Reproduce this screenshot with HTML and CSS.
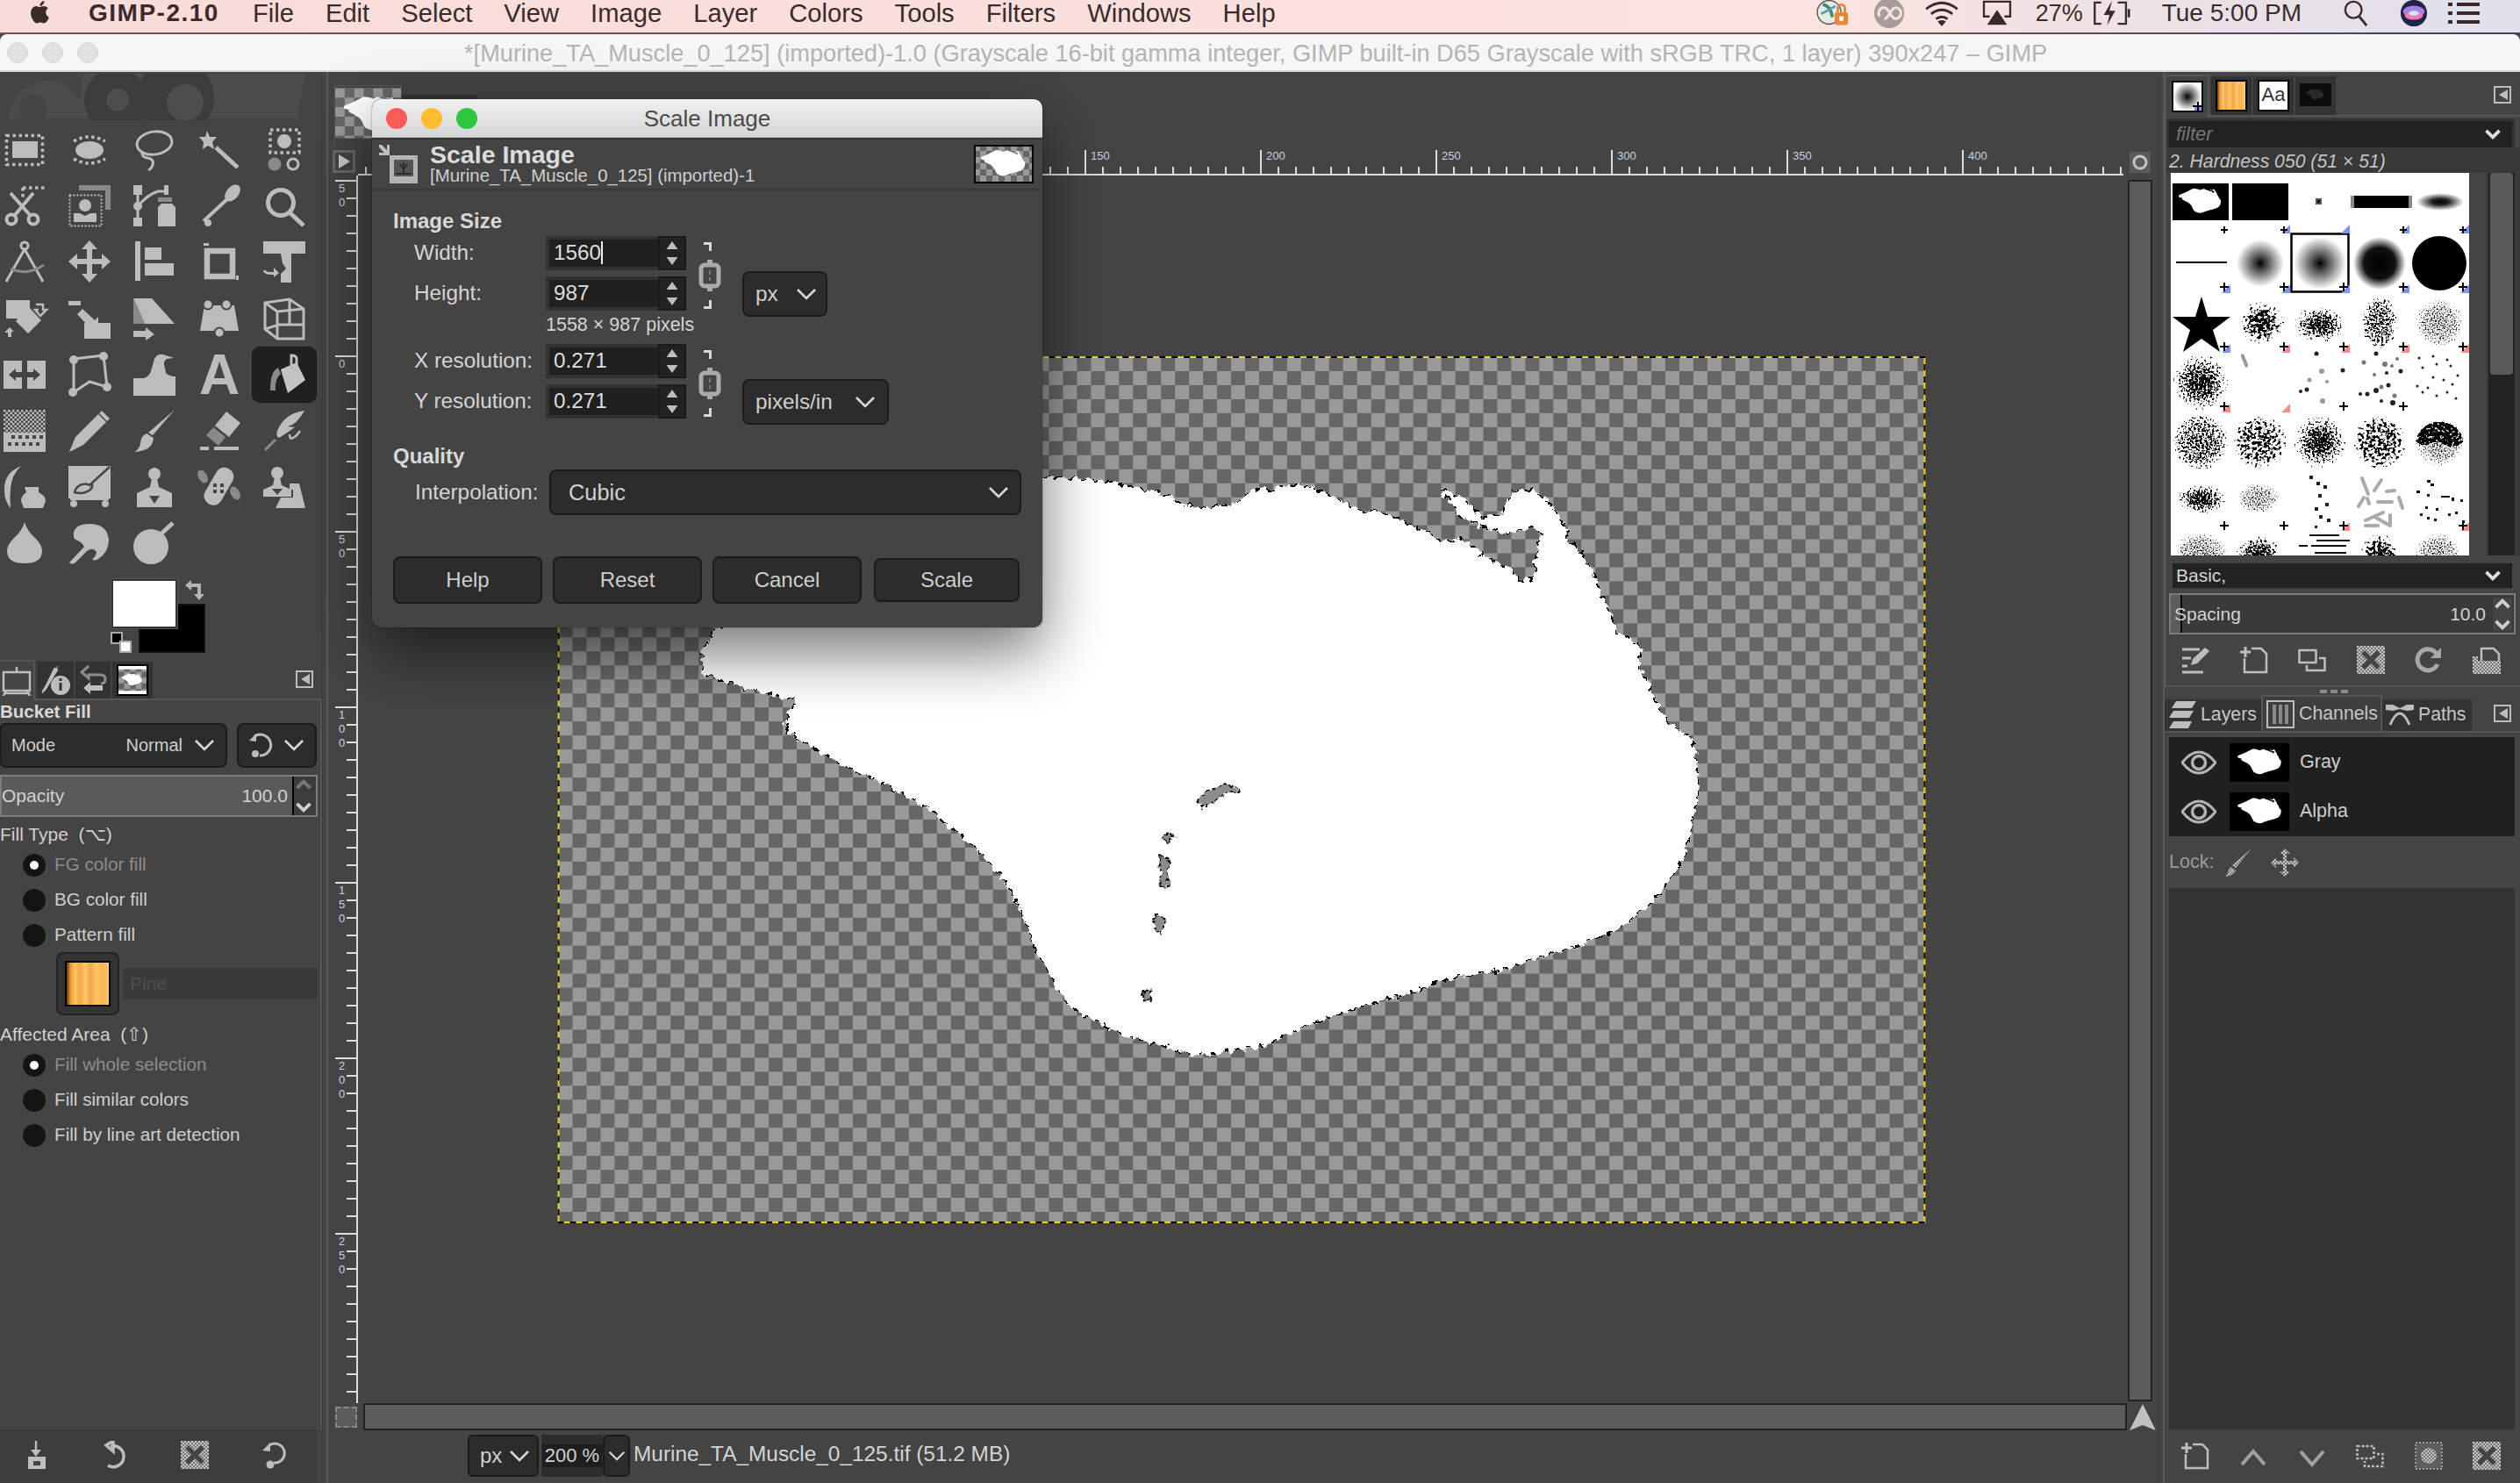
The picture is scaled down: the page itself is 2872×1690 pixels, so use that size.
FILE: index.html
```html
<!DOCTYPE html>
<html lang="en">
<head>
<meta charset="utf-8">
<title>GIMP - Scale Image</title>
<link rel="stylesheet" href="styles.css">
</head>
<body>
<svg class="sprite" aria-hidden="true">
  <defs>
    <pattern id="chk" width="4" height="4" patternUnits="userSpaceOnUse"><rect width="4" height="4" fill="#777"/><rect width="2" height="2" fill="#c4c4c4"/><rect x="2" y="2" width="2" height="2" fill="#c4c4c4"/></pattern>
    <pattern id="chkimg" x="636" y="406" width="32" height="32" patternUnits="userSpaceOnUse"><rect width="32" height="32" fill="#666"/><rect width="16" height="16" fill="#999"/><rect x="16" y="16" width="16" height="16" fill="#999"/></pattern>
    <pattern id="chks" width="14" height="14" patternUnits="userSpaceOnUse"><rect width="14" height="14" fill="#666"/><rect width="7" height="7" fill="#999"/><rect x="7" y="7" width="7" height="7" fill="#999"/></pattern>
    <pattern id="chkm" width="22" height="22" patternUnits="userSpaceOnUse"><rect width="22" height="22" fill="#666"/><rect width="11" height="11" fill="#999"/><rect x="11" y="11" width="11" height="11" fill="#999"/></pattern>
    <pattern id="dith1" width="5" height="5" patternUnits="userSpaceOnUse"><rect width="2.5" height="2.5" fill="#bcbcbc"/><rect x="2.5" y="2.5" width="2.5" height="2.5" fill="#bcbcbc"/></pattern>
    <radialGradient id="soft1"><stop offset="0" stop-color="#000"/><stop offset=".25" stop-color="#444"/><stop offset="1" stop-color="#fff"/></radialGradient>
    <radialGradient id="soft2"><stop offset="0" stop-color="#000"/><stop offset=".35" stop-color="#222"/><stop offset="1" stop-color="#fff"/></radialGradient>
    <radialGradient id="soft3"><stop offset="0" stop-color="#000"/><stop offset=".6" stop-color="#111"/><stop offset="1" stop-color="#fff"/></radialGradient>
    <radialGradient id="fade"><stop offset="0" stop-color="#000" stop-opacity=".72"/><stop offset=".55" stop-color="#000" stop-opacity=".56"/><stop offset="1" stop-color="#000" stop-opacity=".3"/></radialGradient>
    <radialGradient id="fade2"><stop offset="0" stop-color="#000" stop-opacity=".58"/><stop offset=".7" stop-color="#000" stop-opacity=".52"/><stop offset="1" stop-color="#000" stop-opacity=".36"/></radialGradient>
    <linearGradient id="pine" x1="0" x2="1" y1="0" y2="0"><stop offset="0" stop-color="#5a3210"/><stop offset=".08" stop-color="#e88f2c"/><stop offset=".2" stop-color="#ffc862"/><stop offset=".3" stop-color="#f6a84a"/><stop offset=".45" stop-color="#ffc768"/><stop offset=".55" stop-color="#f2a64a"/><stop offset=".7" stop-color="#ffc565"/><stop offset=".85" stop-color="#f7b558"/><stop offset="1" stop-color="#ffc86a"/></linearGradient>
    <filter id="sp1" x="-5%" y="-5%" width="110%" height="110%" color-interpolation-filters="sRGB"><feTurbulence type="fractalNoise" baseFrequency=".42" numOctaves="2" seed="3" result="n"/><feColorMatrix in="n" values="0 0 0 0 0 0 0 0 0 0 0 0 0 0 0 1 0 0 0 0" result="a"/><feComposite in="a" in2="SourceAlpha" operator="arithmetic" k2="1" k3="1" k4="-1"/><feColorMatrix values="0 0 0 0 0 0 0 0 0 0 0 0 0 0 0 0 0 0 9 0"/></filter>
    <filter id="sp2" x="-5%" y="-5%" width="110%" height="110%" color-interpolation-filters="sRGB"><feTurbulence type="fractalNoise" baseFrequency=".3" numOctaves="2" seed="11" result="n"/><feColorMatrix in="n" values="0 0 0 0 0 0 0 0 0 0 0 0 0 0 0 1 0 0 0 0" result="a"/><feComposite in="a" in2="SourceAlpha" operator="arithmetic" k2="1" k3="1" k4="-1"/><feColorMatrix values="0 0 0 0 0 0 0 0 0 0 0 0 0 0 0 0 0 0 9 0"/></filter>
    <filter id="sp3" x="-5%" y="-5%" width="110%" height="110%" color-interpolation-filters="sRGB"><feTurbulence type="fractalNoise" baseFrequency=".6" numOctaves="1" seed="7" result="n"/><feColorMatrix in="n" values="0 0 0 0 0 0 0 0 0 0 0 0 0 0 0 1 0 0 0 0" result="a"/><feComposite in="a" in2="SourceAlpha" operator="arithmetic" k2="1" k3="1" k4="-1"/><feColorMatrix values="0 0 0 0 0 0 0 0 0 0 0 0 0 0 0 0 0 0 4 0"/></filter>
    <filter id="rough" x="-2%" y="-2%" width="104%" height="104%" color-interpolation-filters="sRGB"><feTurbulence type="fractalNoise" baseFrequency=".13" numOctaves="2" seed="5" result="n"/><feDisplacementMap in="SourceGraphic" in2="n" scale="11" xChannelSelector="R" yChannelSelector="G"/></filter>
    <path id="mp" d="M1190 542L1245 546 1280 552 1319 560 1345 572 1364 579 1400 575 1411 573 1425 562 1434 557 1454 557 1459 553 1494 553 1511 562 1534 573 1557 583 1572 582 1595 590 1618 603 1632 605 1643 617 1654 617 1666 613 1698 635 1714 645 1725 648 1729 657 1737 662 1748 660 1754 623 1760 608 1746 599 1737 603 1714 607 1698 600 1685 598 1664 585 1656 573 1654 567 1645 563 1649 558 1672 568 1691 590 1706 587 1716 585 1718 572 1729 558 1744 557 1756 563 1773 580 1787 603 1790 617 1806 633 1819 655 1827 677 1838 697 1842 720 1857 727 1871 738 1871 763 1882 783 1894 807 1905 825 1926 838 1934 853 1936 877 1938 897 1934 920 1928 945 1923 971 1906 1000 1887 1026 1865 1045 1841 1062 1800 1078 1758 1090 1730 1100 1703 1108 1675 1112 1648 1117 1620 1128 1593 1136 1555 1147 1520 1158 1485 1172 1447 1190 1405 1198 1364 1203 1340 1197 1319 1190 1290 1183 1264 1172 1240 1160 1218 1145 1200 1115 1181 1081 1168 1050 1154 1016 1135 992 1117 971 1090 948 1062 925 1035 908 1007 892 960 870 916 846 900 836 894 824 907 797 885 793 861 787 830 778 802 769 800 742 815 718 1000 640Z"/>
    <symbol id="blob" viewBox="636 406 1560 988"><use href="#mp"/></symbol>
    <symbol id="chev" viewBox="0 0 24 16"><path d="M2 3l10 10L22 3" fill="none" stroke="currentColor" stroke-width="2.6"/></symbol>
    <symbol id="chevb" viewBox="0 0 24 16"><path d="M3 3l9 9 9-9" fill="none" stroke="currentColor" stroke-width="4.5"/></symbol>
    <symbol id="tup" viewBox="0 0 16 12"><path d="M8 1l7 10H1z" fill="currentColor"/></symbol>
    <symbol id="tdn" viewBox="0 0 16 12"><path d="M8 11L1 1h14z" fill="currentColor"/></symbol>
    <symbol id="cfg" viewBox="0 0 20 20"><rect x="1" y="1" width="18" height="18" fill="none" stroke="#bdbdbd" stroke-width="2"/><path d="M16 4v12L6 10z" fill="#bdbdbd"/></symbol>
    <symbol id="chain" viewBox="0 0 30 78"><path d="M8 1h9v10h-3V4H8zM8 77h9V67h-3v7H8z" fill="#d8d8d8"/><path d="M15 21v8M15 49v8" stroke="#aaa" stroke-width="6"/><rect x="5" y="27" width="20" height="24" rx="4" fill="none" stroke="#aaa" stroke-width="5"/><path d="M15 33v5M15 41v4" stroke="#777" stroke-width="2"/></symbol>
    <symbol id="eye" viewBox="0 0 40 32"><path d="M1 16Q20-8 39 16 20 40 1 16z" fill="none" stroke="#b4b4b4" stroke-width="3"/><circle cx="20" cy="16" r="7.5" fill="none" stroke="#b4b4b4" stroke-width="3.5"/></symbol>
    <symbol id="newdoc" viewBox="0 0 32 32"><path d="M13 3h11l6 6v21H5V14" fill="none" stroke="#bdbdbd" stroke-width="2.5"/><path d="M6 1v12M0 7h12" stroke="#bdbdbd" stroke-width="3"/></symbol>
    <symbol id="dup" viewBox="0 0 32 32"><rect x="1.500" y="5" width="19" height="14" fill="none" stroke="#bdbdbd" stroke-width="2.5"/><path d="M24 14h6.500v14H10v-6" fill="none" stroke="#bdbdbd" stroke-width="2.5"/></symbol>
    <symbol id="delx" viewBox="0 0 32 32"><rect width="32" height="32" fill="url(#chk)"/><path d="M7 7l18 18M25 7L7 25" stroke="#444" stroke-width="5.500"/></symbol>
  </defs>
</svg>

<header class="menubar">
  <svg class="apple" viewBox="0 0 30 30"><path d="M21 15c0-4 3-5 3-5-1.800-2.700-4.600-3-5.600-3-2.400-.2-4.600 1.400-5.800 1.400S10.500 7 8.600 7C6 7 3.800 8.500 2.500 10.800c-2.600 4.500-.7 11.200 1.900 15 1.300 1.800 2.700 3.700 4.700 3.600 1.900 0 2.600-1.200 4.800-1.200s2.900 1.200 4.800 1.200c2 0 3.300-1.800 4.500-3.600 1.400-2 2-4 2-4.100s-3.700-1.500-4.200-6.700zM17.500 4.300C18.500 3 19.200 1.300 19 0c-1.500.1-3.200 1-4.300 2.300-.9 1.100-1.700 2.800-1.500 4.400 1.700.1 3.300-.9 4.300-2.400z"/></svg>
  <nav class="menus">
    <span class="appname">GIMP-2.10</span><span>File</span><span>Edit</span><span>Select</span><span>View</span><span>Image</span><span>Layer</span><span>Colors</span><span>Tools</span><span>Filters</span><span>Windows</span><span>Help</span>
  </nav>
  <div class="status">
    <svg class="mi xo" viewBox="0 0 44 40"><circle cx="16" cy="20" r="15" fill="#e8e8e4" stroke="#555" stroke-width="1.500"/><path d="M8 10q10 2 12 16" stroke="#3b8f5f" stroke-width="4" fill="none"/><path d="M6 22q8-4 18-10" stroke="#4f9ec4" stroke-width="3" fill="none"/><rect x="23" y="20" width="17" height="16" rx="3" fill="#e8863a"/><path d="M27 20v-5a4.500 4.500 0 0 1 9 0v5" fill="none" stroke="#e8863a" stroke-width="3"/><rect x="29" y="25" width="5" height="6" fill="#fff"/></svg>
    <svg class="mi cc" viewBox="0 0 40 40"><circle cx="20" cy="20" r="19" fill="#a89b9b"/><path d="M8 24a7 7 0 0 1 6-11c6 0 8 14 14 14a6 6 0 0 0 0-14c-6 0-8 14-14 14" fill="none" stroke="#f4e2de" stroke-width="3.500"/></svg>
    <svg class="mi wifi" viewBox="0 0 42 32"><path d="M2 11q19-15 38 0M8 17q13-10 26 0M14 23q7-5 14 0" fill="none" stroke="#3b2a2a" stroke-width="3"/><path d="M21 32l-5-6q5-3 10 0z" fill="#3b2a2a"/></svg>
    <svg class="mi air" viewBox="0 0 36 32"><path d="M9 20H2V2h32v18h-7" fill="none" stroke="#3b2a2a" stroke-width="2.500"/><path d="M18 12l12 18H6z" fill="#3b2a2a"/></svg>
    <span class="pct">27%</span>
    <svg class="mi batt" viewBox="0 0 46 32"><path d="M10 3H2v26h8M30 3h10v26H30" fill="none" stroke="#3b2a2a" stroke-width="2.500"/><rect x="42" y="11" width="3" height="10" fill="#3b2a2a"/><path d="M23 1L13 18h7l-3 13 10-18h-7z" fill="#3b2a2a"/></svg>
    <span class="clock">Tue 5:00 PM</span>
    <svg class="mi search" viewBox="0 0 30 32"><circle cx="12" cy="12" r="10" fill="none" stroke="#3b2a2a" stroke-width="2.500"/><path d="M19 20l9 11" stroke="#3b2a2a" stroke-width="3"/></svg>
    <svg class="mi siri" viewBox="0 0 34 34"><circle cx="17" cy="17" r="16" fill="#20244a"/><ellipse cx="17" cy="15" rx="13" ry="7" fill="#a67fe0"/><ellipse cx="17" cy="20" rx="11" ry="5" fill="#f07bb7"/><ellipse cx="17" cy="17" rx="6" ry="3" fill="#cfe8ff"/></svg>
    <svg class="mi list" viewBox="0 0 36 26"><path d="M0 3h5M10 3h26M0 13h5M10 13h26M0 23h5M10 23h26" stroke="#3b2a2a" stroke-width="4"/></svg>
  </div>
</header>

<div class="wintitle">
  <div class="lights"><i></i><i></i><i></i></div>
  <div class="wtext">*[Murine_TA_Muscle_0_125] (imported)-1.0 (Grayscale 16-bit gamma integer, GIMP built-in D65 Grayscale with sRGB TRC, 1 layer) 390x247 – GIMP</div>
</div>

<main class="app">
  <aside class="ldock">
    <svg class="wilber" viewBox="0 0 367 53"><path d="M94 0H348L338 51H10C12 34 24 10 56 8 70 8 82 16 92 30z" fill="#4c4c4c"/><circle cx="38" cy="40" r="16" fill="#444"/><circle cx="132" cy="30" r="36" fill="#3c3c3c"/><circle cx="134" cy="30" r="13" fill="#4e4e4e"/><circle cx="200" cy="27" r="44" fill="#3c3c3c"/><circle cx="211" cy="33" r="21" fill="#4e4e4e"/></svg>
    <div class="tools">
      <div class="tool"><svg class="ic" viewBox="0 0 48 48"><rect x="3.500" y="8.500" width="41" height="33" class="dots"/><rect x="10" y="15" width="29" height="19"/></svg></div>
      <div class="tool"><svg class="ic" viewBox="0 0 48 48"><ellipse cx="24" cy="25" rx="16" ry="10"/><path d="M6 15Q24 5 42 15M6 35Q24 45 42 35" class="dots"/></svg></div>
      <div class="tool"><svg class="ic" viewBox="0 0 48 48"><ellipse cx="24" cy="17" rx="20" ry="13" transform="rotate(-8 24 17)" class="st"/><path d="M10 27q-1 6 6 7 8 1 6 8-1 4-5 6" class="st"/></svg></div>
      <div class="tool"><svg class="ic" viewBox="0 0 48 48"><path d="M10 3l3 7 8 0-5 6 2 8-7-4-6 4 1-8-5-6 7 0z"/><path d="M20 22l25 23" class="st5"/></svg></div>
      <div class="tool"><svg class="ic" viewBox="0 0 48 48"><rect x="8" y="2" width="33" height="26" class="dots"/><circle cx="24" cy="15" r="8"/><circle cx="13" cy="41" r="7.500" class="g"/><circle cx="34" cy="41" r="6" class="st"/></svg></div>

      <div class="tool"><svg class="ic" viewBox="0 0 48 48"><circle cx="9" cy="40" r="5.500" class="st4"/><circle cx="34" cy="40" r="5.500" class="st4"/><path d="M13 35L34 10M30 35L8 10" class="st4"/><path d="M22 4h26M22 4v11" class="dots"/></svg></div>
      <div class="tool"><svg class="ic" viewBox="0 0 48 48"><path d="M12 1h36v28h-6V7H12z" class="g"/><rect x="1.500" y="12.500" width="36" height="35" class="dots sm"/><circle cx="19" cy="24" r="7"/><path d="M6 43V33h7l6 3 6-3h7v10z"/></svg></div>
      <div class="tool"><svg class="ic" viewBox="0 0 48 48"><rect y="1" width="10" height="11"/><circle cx="5" cy="25" r="5"/><rect y="38" width="10" height="10"/><path d="M5 10v30" class="st"/><path d="M6 24Q16 12 28 8h9" class="st"/><rect x="35" y="1" width="5" height="11"/><rect x="28" y="15" width="16" height="5" class="g"/><path d="M28 48V26l4-4h12l4 4v22z"/></svg></div>
      <div class="tool"><svg class="ic" viewBox="0 0 48 48"><path d="M6 42L34 16" class="st4"/><ellipse cx="39" cy="10" rx="7" ry="11" transform="rotate(40 39 10)"/><circle cx="11" cy="44" r="4"/></svg></div>
      <div class="tool"><svg class="ic" viewBox="0 0 48 48"><circle cx="20" cy="21" r="14.500" class="st5"/><path d="M31 33l15 14" class="st5"/></svg></div>

      <div class="tool"><svg class="ic" viewBox="0 0 48 48"><circle cx="24" cy="6" r="4" class="st"/><path d="M24 10L3 47M24 10l21 37" class="st"/><path d="M8 32q18 9 38-4" class="gs"/></svg></div>
      <div class="tool"><svg class="ic" viewBox="0 0 48 48"><path d="M24 0l9 10h-6v11h11v-6l10 9-10 9v-6H27v11h6l-9 10-9-10h6V27H10v6L0 24l10-9v6h11V10h-6z"/></svg></div>
      <div class="tool"><svg class="ic" viewBox="0 0 48 48"><rect x="2" y="1" width="6" height="45"/><rect x="13" y="8" width="19" height="14"/><rect x="13" y="26" width="33" height="14"/></svg></div>
      <div class="tool"><svg class="ic" viewBox="0 0 48 48"><path d="M10 12h29v29H10z" class="st6"/><rect x="6" y="3" width="6" height="3"/><rect x="43" y="40" width="3" height="5"/></svg></div>
      <div class="tool"><svg class="ic" viewBox="0 0 48 48"><path d="M0 1h48v14H30l-6 8-2-8H0z"/><path d="M20 15h12v33H20V38l6-6-4-6z"/><path d="M1 34q2 5 14 3" class="st"/><path d="M12 31l6 6-6 5z"/></svg></div>

      <div class="tool"><svg class="ic" viewBox="0 0 48 48"><path d="M3 3h27v16L19 28l-4-4H3z"/><path d="M29 11l14 15-15 15-14-14z"/><path d="M37 8h8v6h4l-7 7-6-7h4" class="st2"/><path d="M1 40l6-6 5 5H9v6H5v-5z"/></svg></div>
      <div class="tool"><svg class="ic" viewBox="0 0 48 48"><rect y="4" width="14" height="5"/><path d="M16 13l14 13 4-4v15H19l4-4-13-14z"/><rect x="18" y="29" width="30" height="18"/></svg></div>
      <div class="tool"><svg class="ic" viewBox="0 0 48 48"><path d="M0 1h21l26 29H13z"/><path d="M0 1l13 29H0z" class="g"/><path d="M0 38h14v-4l10 8-10 7v-4H0z"/></svg></div>
      <div class="tool"><svg class="ic" viewBox="0 0 48 48"><path d="M7 9h34l5 29H2z"/><circle cx="11" cy="8" r="5.500" class="halo"/><circle cx="32" cy="8" r="5.500" class="halo"/><circle cx="24" cy="40" r="5.500" class="halo"/></svg></div>
      <div class="tool"><svg class="ic" viewBox="0 0 48 48"><path d="M2 6l28-4 16 11v34H16L2 36zM2 6l14 10 30-3M16 16v31M2 36l16-5 28 0M30 2v29" class="st"/></svg></div>

      <div class="tool"><svg class="ic" viewBox="0 0 48 48"><rect y="8" width="48" height="32"/><path d="M6 24l8-7v4h20v-4l8 7-8 7v-4H14v4z" class="dark"/><path d="M21 8h6v32h-6z" class="dark"/></svg></div>
      <div class="tool"><svg class="ic" viewBox="0 0 48 48"><path d="M6 6l34-4 4 36-20-6-18 12z" class="st"/><circle cx="6" cy="7" r="5"/><circle cx="40" cy="3" r="5"/><circle cx="44" cy="38" r="5"/><circle cx="5" cy="44" r="5"/></svg></div>
      <div class="tool"><svg class="ic" viewBox="0 0 48 48"><path d="M0 48V28h12q6-2 8-8l4-14q3-6 10-5l12 4-8 1q-5 3-2 10l1 6q4 4 11 4v22z"/></svg></div>
      <div class="tool"><svg class="ic" viewBox="0 0 48 48"><text x="24" y="46" class="big">A</text></svg></div>
      <div class="tool active"><svg class="ic" viewBox="0 0 48 48"><path d="M20 18l18-8 10 20-20 15z" fill="#c4c4c4"/><path d="M32 18v-16q6 0 6 4v14" class="st"/><path d="M17 16q-9 4-9 26l6 0q-1-14 6-19z" class="g"/></svg></div>

      <div class="tool"><svg class="ic" viewBox="0 0 48 48"><rect width="48" height="30" fill="url(#dith1)"/><rect y="26" width="48" height="22"/><path d="M5 37h4v4H5zM13 37h4v4h-4zM21 37h4v4h-4zM29 37h4v4h-4zM37 37h4v4h-4zM9 29h4v4H9zM17 29h4v4h-4zM25 29h4v4h-4zM33 29h4v4h-4zM41 29h4v4h-4z" class="dark"/></svg></div>
      <div class="tool"><svg class="ic" viewBox="0 0 48 48"><path d="M1 48l7-17L34 5l9 9-26 26z"/><path d="M38 1l9 9-3 3-9-9z"/></svg></div>
      <div class="tool"><svg class="ic" viewBox="0 0 48 48"><path d="M47 0L22 29l-5-3zM15 27l8 5q-1 11-11 14-6 2-11 2 6-3 7-10 1-9 7-11z"/></svg></div>
      <div class="tool"><svg class="ic" viewBox="0 0 48 48"><path d="M32 2l16 13-13 16-16-13z"/><path d="M17 20l14 11-8 10-14-12z" class="g"/><path d="M2 42h10v4H2zM18 42h28v4H18z"/></svg></div>
      <div class="tool"><svg class="ic" viewBox="0 0 48 48"><path d="M47 1Q24 4 16 24q-2 6 2 8Q26 27 36 20l-8-1q10-2 19-18z"/><path d="M30 28q0 6 4 4t8-8" class="st2"/><path d="M14 34L2 46" class="gs"/></svg></div>

      <div class="tool"><svg class="ic" viewBox="0 0 48 48"><path d="M20 0Q0 8 1 28q0 12 7 20-1-12 0-22Q9 10 20 0z"/><path d="M24 24h16v6q8 4 8 10l-3 8H23l-3-8q0-6 6-10z"/></svg></div>
      <div class="tool"><svg class="ic" viewBox="0 0 48 48"><rect width="48" height="37"/><path d="M47 1L24 22q-4-3-11 0-5 3-6 8 10 3 18-3 3-3 2-7" fill="none" stroke="#444" stroke-width="2.500"/><circle cx="6" cy="43" r="4"/><circle cx="42" cy="43" r="4"/><rect x="2" y="37" width="44" height="2"/></svg></div>
      <div class="tool"><svg class="ic" viewBox="0 0 48 48"><circle cx="24" cy="9" r="7"/><path d="M21 14h6l2 10 15 7v16H4V31l15-7z"/><path d="M18 34h12l-6 9z" class="dark"/></svg></div>
      <div class="tool"><svg class="ic" viewBox="0 0 48 48"><ellipse cx="5" cy="12" rx="5" ry="8" class="g" transform="rotate(-30 5 12)"/><ellipse cx="42" cy="31" rx="5" ry="8" class="g" transform="rotate(-30 42 31)"/><rect x="13" y="0" width="21" height="46" rx="10" transform="rotate(30 23 23)"/><path d="M17 20h4v4h-4zM25 20h4v4h-4zM17 27h4v4h-4zM25 27h4v4h-4z" class="dark"/></svg></div>
      <div class="tool"><svg class="ic" viewBox="0 0 48 48"><circle cx="16" cy="8" r="7"/><path d="M13 13h6l2 9 11 5v8H0v-8l11-5z"/><path d="M10 26h12l-6 7z" class="dark"/><path d="M30 20h11l7 28H14l6-12h14v-9h-4z"/></svg></div>

      <div class="tool"><svg class="ic" viewBox="0 0 48 48"><path d="M24 0q3 10 12 18 8 8 8 15 0 14-20 14T4 33q0-7 8-15Q21 10 24 0z"/></svg></div>
      <div class="tool"><svg class="ic" viewBox="0 0 48 48"><path d="M6 12Q8 2 24 2q20 0 22 18 0 14-12 22-5 3-7 0 4-2 5-8-4-6-11-1L8 46q-4 3-7 0l17-18q-3-6-10-8-3-3-2-8z"/></svg></div>
      <div class="tool"><svg class="ic" viewBox="0 0 48 48"><circle cx="20" cy="28" r="20"/><path d="M30 15L45 1" class="st5"/></svg></div>
    </div>

    <div class="colors">
      <div class="fg"></div>
      <div class="bg"></div>
      <svg class="swap" viewBox="0 0 24 24"><path d="M1 7l7-6v4h11v12h4l-6 7-6-7h4V9H8v4z" fill="#b5b5b5"/></svg>
      <div class="defcol"><i></i><b></b></div>
    </div>

    <div class="ltabs">
      <div class="ltab on"><svg viewBox="0 0 34 34" class="t34"><path d="M2 7h30v21H2z" fill="none" stroke="#bdbdbd" stroke-width="2.500"/><path d="M17 1v6M2 31h30M5 28l-3 6M29 28l3 6" stroke="#bdbdbd" stroke-width="2.500"/></svg></div>
      <div class="ltab"><svg viewBox="0 0 34 34" class="t34"><path d="M20 1L2 30M16 3l4 2L6 28l-4 4z" fill="#bdbdbd" stroke="#bdbdbd"/><circle cx="23" cy="23" r="11" fill="#bdbdbd"/><path d="M23 20v9M23 15v3" stroke="#333" stroke-width="3"/></svg></div>
      <div class="ltab"><svg viewBox="0 0 34 34" class="t34"><path d="M12 1L4 8l8 7v-4h14q5 0 5 5t-5 5" fill="none" stroke="#8d8d8d" stroke-width="3"/><path d="M14 19l-8 7 8 7v-4h14v-6H14z" fill="#bdbdbd"/></svg></div>
      <div class="ltab last"><svg viewBox="0 0 34 34" class="t34b"><rect width="34" height="34" fill="#fff"/><rect y="4" width="34" height="26" fill="url(#chks)"/><use href="#blob" x="0" y="4" width="34" height="26" fill="#fff"/></svg></div>
      <button class="cfgbtn ml" aria-label="Configure"><svg class="cfgic"><use href="#cfg"/></svg></button>
    </div>

    <section class="opts">
      <h3 class="optitle">Bucket Fill</h3>
      <div class="modeline">
        <div class="combo mode"><span>Mode</span><span class="mval">Normal</span><svg class="chv"><use href="#chev"/></svg></div>
        <div class="combo rst"><svg viewBox="0 0 32 32" class="rsti"><path d="M8 6a12 12 0 1 1 6 22" fill="none" stroke="#bdbdbd" stroke-width="3"/><path d="M2 11l8-8v9z" fill="#bdbdbd"/><circle cx="9" cy="26" r="4" fill="#bdbdbd"/></svg><svg class="chv"><use href="#chev"/></svg></div>
      </div>
      <div class="scale op"><span class="sname">Opacity</span><span class="sval">100.0</span><div class="sbtns"><svg class="sb dimc"><use href="#chevb"/></svg><svg class="sb"><use href="#chevb"/></svg></div></div>
      <p class="grp">Fill Type&nbsp; (⌥)</p>
      <div class="radio on dim">FG color fill</div>
      <div class="radio">BG color fill</div>
      <div class="radio">Pattern fill</div>
      <div class="patrow">
        <div class="patbtn"><svg class="pat" viewBox="0 0 52 52"><rect width="52" height="52" fill="url(#pine)"/></svg></div>
        <div class="patname">Pine</div>
      </div>
      <p class="grp area">Affected Area&nbsp; (⇧)</p>
      <div class="radio on dim">Fill whole selection</div>
      <div class="radio">Fill similar colors</div>
      <div class="radio">Fill by line art detection</div>
    </section>

    <footer class="ofoot">
      <svg viewBox="0 0 32 32" class="f32"><path d="M15 0v14" stroke="#bdbdbd" stroke-width="2.500"/><path d="M9 10h12l-6 8z" fill="#bdbdbd"/><path d="M6 18h20v14H6z" fill="#bdbdbd"/><rect x="12" y="23" width="8" height="5" fill="#444"/></svg>
      <svg viewBox="0 0 32 32" class="f32"><path d="M5 5l8-5v12zM10 6a12 12 0 1 1-3 22" fill="none" stroke="#bdbdbd" stroke-width="3.500"/></svg>
      <svg class="f32"><use href="#delx"/></svg>
      <svg viewBox="0 0 32 32" class="f32"><path d="M11 5a11 11 0 1 1 5 20" fill="none" stroke="#bdbdbd" stroke-width="3"/><path d="M3 11l9-9v10z" fill="#bdbdbd"/><circle cx="12" cy="27" r="4.500" fill="#bdbdbd"/></svg>
    </footer>
  </aside>

  <div class="vsep"></div>

  <section class="center">
    <div class="itabs">
      <div class="itab"><svg class="ithumb" viewBox="0 0 76 58"><rect width="76" height="58" fill="url(#chkm)"/><use href="#blob" x="0" y="2" width="92" height="58" fill="#fff"/></svg></div>
      <div class="itab off"></div>
    </div>
    <div class="hrow">
      <button class="qmask" aria-label="Toggle quick mask"><svg viewBox="0 0 26 26" class="qm"><rect x="1.500" y="1.500" width="23" height="23" fill="none" stroke="#6f6f6f" stroke-width="2.500"/><path d="M7 5l13 8-13 8z" fill="#c8c8c8"/></svg></button>
      <div class="hruler">
        <span class="hl mid" style="left:828px">150</span>
        <span class="hl" style="left:1028px">200</span>
        <span class="hl" style="left:1228px">250</span>
        <span class="hl" style="left:1428px">300</span>
        <span class="hl" style="left:1628px">350</span>
        <span class="hl" style="left:1828px">400</span>
      </div>
      <button class="zoomfit" aria-label="Zoom"><svg viewBox="0 0 26 26" class="qm"><rect x="1" y="1" width="24" height="24" fill="#5a5a5a"/><circle cx="13" cy="13" r="7" fill="none" stroke="#c4c4c4" stroke-width="3"/></svg></button>
    </div>
    <div class="vrow">
      <div class="vruler">
        <span class="vl" style="top:6px">50</span>
        <span class="vl" style="top:206px">0</span>
        <span class="vl" style="top:406px">50</span>
        <span class="vl" style="top:606px">100</span>
        <span class="vl" style="top:806px">150</span>
        <span class="vl" style="top:1006px">200</span>
        <span class="vl" style="top:1206px">250</span>
      </div>
      <div class="canvas">
        <svg class="image" viewBox="636 406 1560 988">
          <rect x="636" y="406" width="1560" height="988" fill="url(#chkimg)"/>
          <g class="rough">
            <use href="#mp" class="mf"/>
            <use href="#mp" class="antw"/>
            <use href="#mp" class="antb"/>
            <path d="M1366 912l14-12 20-5 12 5-17 5-10 10-15 5zM1328 950l10 3-3 8-8-2zM1322 975l12 4-3 15 3 14-12 2 2-16zM1318 1042l10 2-2 20-10-2zM1304 1130l8 1-2 10-6-2z" class="hole"/>
          </g>
          <rect x="636" y="406" width="1560" height="988" class="fy"/>
          <rect x="636" y="406" width="1560" height="988" class="fk"/>
        </svg>
      </div>
      <div class="vscroll"><div class="vthumb"></div></div>
    </div>
    <div class="hsrow">
      <div class="corner"></div>
      <div class="hscroll"></div>
      <svg class="nav" viewBox="0 0 32 32"><path d="M16 1l15 30-15-6-15 6z" fill="#c0c0c0"/></svg>
    </div>
    <div class="statusbar">
      <div class="combo sunit"><span>px</span><svg class="chv"><use href="#chev"/></svg></div>
      <div class="szoom"><span>200 %</span></div>
      <div class="combo sarr"><svg class="chv"><use href="#chev"/></svg></div>
      <span class="sfile">Murine_TA_Muscle_0_125.tif (51.2 MB)</span>
    </div>
  </section>

  <div class="vsep r"></div>

  <aside class="rdock">
    <div class="rtabs">
      <div class="rtab on"><svg class="rt" viewBox="0 0 36 36"><rect width="36" height="36" fill="#000"/><rect x="2" y="2" width="32" height="32" fill="url(#soft1)"/><path d="M26 28h8v6h-8z" fill="#7f94f0"/><path d="M30 24v10M24 29h10" stroke="#000" stroke-width="2"/></svg></div>
      <div class="rtab"><svg class="rt" viewBox="0 0 36 36"><rect width="36" height="36" fill="#000"/><rect x="2" y="2" width="32" height="32" fill="url(#pine)"/></svg></div>
      <div class="rtab"><div class="aa">Aa</div></div>
      <div class="rtab"><svg class="rt" viewBox="0 0 36 36"><rect y="4" width="36" height="26" fill="#0c0c0c"/><use href="#blob" x="4" y="8" width="28" height="18" fill="#2a2a2a"/></svg></div>
      <button class="cfgbtn ml" aria-label="Configure"><svg class="cfgic"><use href="#cfg"/></svg></button>
    </div>
    <section class="rpanel">
      <div class="filter"><span>filter</span><svg class="chvb"><use href="#chevb"/></svg></div>
      <div class="bname">2. Hardness 050 (51 × 51)</div>
      <div class="brushes">
        <svg class="bgrid" viewBox="0 0 340 436">
          <rect width="340" height="436" fill="#fff"/>
          <!-- row 1 -->
          <rect x="2" y="12" width="64" height="42" fill="#000"/><use href="#blob" x="2" y="12" width="66" height="42" fill="#fff"/>
          <rect x="70" y="12" width="64" height="42" fill="#000"/>
          <rect x="165" y="29" width="7" height="7" fill="#555"/><rect x="167" y="31" width="3" height="3" fill="#111"/>
          <rect x="209" y="26" width="62" height="14" fill="#000"/><rect x="205" y="26" width="4" height="14" fill="#888"/><rect x="271" y="26" width="4" height="14" fill="#888"/>
          <ellipse cx="307" cy="33" rx="27" ry="10" fill="url(#soft2)"/>
          <!-- row 2 -->
          <rect x="6" y="101" width="58" height="2" fill="#000"/>
          <circle cx="102" cy="103" r="27" fill="url(#soft1)"/>
          <circle cx="170" cy="103" r="30" fill="url(#soft1)"/>
          <rect x="137.500" y="69.500" width="65" height="66" fill="none" stroke="#000" stroke-width="2.500"/>
          <circle cx="238" cy="103" r="30" fill="url(#soft3)"/>
          <circle cx="306" cy="103" r="31" fill="#000"/>
          <!-- row 3 -->
          <path d="M35 141l7 23 26 0-20 15 8 25-21-15-21 15 8-25-20-15 26 0z" fill="#000"/>
          <ellipse cx="103" cy="171" rx="26" ry="24" fill="url(#fade)" filter="url(#sp2)"/>
          <ellipse cx="170" cy="173" rx="30" ry="20" fill="url(#fade)" filter="url(#sp1)"/>
          <ellipse cx="238" cy="171" rx="20" ry="30" fill="url(#fade2)" filter="url(#sp1)"/>
          <circle cx="306" cy="171" r="27" fill="url(#fade2)" filter="url(#sp3)"/>
          <!-- row 4 -->
          <circle cx="34" cy="239" r="32" fill="url(#fade)" filter="url(#sp1)"/>
          <rect x="82" y="206" width="4" height="16" rx="2" fill="#999" transform="rotate(-22 84 214)"/>
          <g fill="#222"><circle cx="166" cy="206" r="2.500"/><circle cx="196" cy="225" r="2.500"/><circle cx="155" cy="247" r="2.500"/><circle cx="148" cy="249" r="2"/></g>
          <g fill="#999"><circle cx="172" cy="226" r="3"/><circle cx="158" cy="236" r="2.500"/><circle cx="178" cy="238" r="2"/><circle cx="173" cy="260" r="3"/></g>
          <g fill="#222"><circle cx="234" cy="206" r="2.500"/><circle cx="262" cy="226" r="2.500"/><circle cx="246" cy="228" r="2"/><circle cx="234" cy="248" r="3"/><circle cx="224" cy="252" r="2.500"/><circle cx="216" cy="252" r="2"/><circle cx="240" cy="260" r="2"/><circle cx="253" cy="262" r="3"/><circle cx="248" cy="242" r="2.500"/></g>
          <g fill="#777"><circle cx="220" cy="216" r="2.500"/><circle cx="244" cy="218" r="3"/><circle cx="252" cy="220" r="2"/><circle cx="258" cy="212" r="2"/><circle cx="240" cy="244" r="2.500"/><circle cx="255" cy="254" r="2.500"/><circle cx="232" cy="230" r="2"/></g>
          <g fill="#222"><circle cx="283" cy="211" r="1.500"/><circle cx="299" cy="209" r="1.500"/><circle cx="315" cy="213" r="1.500"/><circle cx="287" cy="222" r="1.500"/><circle cx="303" cy="218" r="1.500"/><circle cx="319" cy="220" r="1.500"/><circle cx="327" cy="231" r="1.500"/><circle cx="299" cy="233" r="1.500"/><circle cx="311" cy="236" r="1.500"/><circle cx="281" cy="243" r="1.500"/><circle cx="293" cy="245" r="1.500"/><circle cx="321" cy="241" r="1.500"/><circle cx="287" cy="250" r="1.500"/><circle cx="303" cy="254" r="1.500"/><circle cx="315" cy="250" r="1.500"/><circle cx="325" cy="257" r="1.500"/></g>
          <!-- row 5 -->
          <circle cx="34" cy="307" r="31" fill="url(#fade2)" filter="url(#sp1)"/>
          <circle cx="102" cy="307" r="30" fill="url(#fade2)" filter="url(#sp2)"/>
          <circle cx="170" cy="307" r="30" fill="url(#fade)" filter="url(#sp1)"/>
          <circle cx="238" cy="307" r="30" fill="url(#fade2)" filter="url(#sp2)"/>
          <path d="M279 306a28 28 0 0 1 55 0q-10 10-22 4-10-6-20 0-6 2-13-4z" fill="#000" fill-opacity=".68" filter="url(#sp2)"/>
          <circle cx="306" cy="307" r="28" fill="url(#fade2)" filter="url(#sp3)"/>
          <!-- row 6 -->
          <ellipse cx="35" cy="372" rx="28" ry="17" fill="url(#fade)" filter="url(#sp1)"/>
          <ellipse cx="100" cy="371" rx="24" ry="17" fill="url(#fade2)" filter="url(#sp3)"/>
          <g fill="#222"><rect x="158" y="345" width="4" height="4"/><rect x="166" y="352" width="4" height="4"/><rect x="174" y="356" width="4" height="4"/><rect x="168" y="366" width="4" height="4"/><rect x="176" y="376" width="4" height="4"/><rect x="164" y="381" width="4" height="4"/><rect x="169" y="390" width="4" height="4"/><rect x="178" y="394" width="4" height="4"/><rect x="164" y="402" width="3" height="3"/></g>
          <g stroke="#aaa" stroke-width="4" stroke-linecap="round"><path d="M218 348l7 18M232 362l8-12M246 363l9-1M236 375h16M260 370l4 12M214 380l6-10M226 377l-2-6M222 396l20-9M234 393l14 8M222 402h14M250 390v12"/></g>
          <g fill="#111"><rect x="292" y="350" width="4" height="3"/><rect x="296" y="354" width="4" height="3"/><rect x="280" y="362" width="4" height="3"/><rect x="292" y="366" width="3" height="3"/><rect x="308" y="368" width="10" height="2"/><rect x="320" y="370" width="3" height="4"/><rect x="290" y="380" width="3" height="3"/><rect x="284" y="388" width="3" height="3"/><rect x="292" y="392" width="3" height="3"/><rect x="302" y="382" width="3" height="3"/><rect x="316" y="388" width="3" height="3"/><rect x="324" y="386" width="3" height="3"/><rect x="332" y="396" width="3" height="3"/><rect x="330" y="372" width="3" height="3"/><rect x="300" y="394" width="3" height="3"/></g>
          <!-- row 7 -->
          <ellipse cx="34" cy="432" rx="30" ry="22" fill="url(#fade2)" filter="url(#sp3)"/>
          <ellipse cx="100" cy="434" rx="26" ry="20" fill="url(#fade)" filter="url(#sp1)"/>
          <g fill="#111"><rect x="158" y="412" width="34" height="2"/><rect x="166" y="418" width="38" height="2"/><rect x="146" y="424" width="10" height="2"/><rect x="160" y="424" width="40" height="2"/><rect x="164" y="432" width="36" height="2"/></g>
          <ellipse cx="238" cy="436" rx="22" ry="26" fill="url(#fade)" filter="url(#sp2)"/>
          <ellipse cx="305" cy="436" rx="26" ry="26" fill="url(#fade2)" filter="url(#sp3)"/>
          <!-- corner markers -->
          <g fill="#7f94f0">
            <path d="M136 61v-10l-10 10zM204 61v-10l-10 10h-0zM272 61v-10l-10 10zM340 61v-10l-10 10zM68 129v-10l-10 10zM136 129v-10l-10 10zM204 129v-10l-10 10zM272 129v-10l-10 10zM340 129v-10l-10 10zM68 197v-10l-10 10z" transform="translate(0 8)"/>
          </g>
          <g fill="#fb8a8a" transform="translate(0 8)">
            <path d="M136 197v-10l-10 10zM204 197v-10l-10 10zM272 197v-10l-10 10zM340 197v-10l-10 10zM68 265v-10l-10 10zM136 265v-10l-10 10z"/>
            <path d="M204 400v-10l-10 10zM340 400v-10l-10 10z"/>
          </g>
          <g stroke="#000" stroke-width="2" fill="none">
            <path d="M61 64v8M57 68h8M129 64v8M125 68h8M265 64v8M261 68h8M333 64v8M329 68h8" transform="translate(0 -3)"/>
            <path d="M61 125v10M56 130h10M129 125v10M124 130h10M197 125v10M192 130h10M265 125v10M260 130h10M333 125v10M328 130h10"/>
            <path d="M61 193v10M56 198h10M129 193v10M124 198h10M197 193v10M192 198h10M265 193v10M260 198h10M333 193v10M328 198h10"/>
            <path d="M61 261v10M56 266h10M197 261v10M192 266h10M265 261v10M260 266h10"/>
            <path d="M61 397v10M56 402h10M129 397v10M124 402h10M197 397v10M192 402h10M333 397v10M328 402h10"/>
          </g>
        </svg>
        <div class="bstrip"></div>
        <div class="bscroll"><div class="bthumb"></div></div>
      </div>
      <div class="basic"><span>Basic,</span><svg class="chvb"><use href="#chevb"/></svg></div>
      <div class="scale spc"><i class="fill"></i><span class="sname">Spacing</span><span class="sval">10.0</span><div class="sbtns"><svg class="sb"><use href="#chevb"/></svg><svg class="sb"><use href="#chevb"/></svg></div></div>
      <div class="actions">
        <svg viewBox="0 0 32 32"><path d="M0 4h20M0 14h10M0 23h6M0 30h24" stroke="#bdbdbd" stroke-width="3"/><path d="M10 22l2-7L26 2l5 4-14 14z" fill="#bdbdbd"/></svg>
        <svg><use href="#newdoc"/></svg>
        <svg><use href="#dup"/></svg>
        <svg><use href="#delx"/></svg>
        <svg viewBox="0 0 32 32"><path d="M26 21a12 12 0 1 1-1-12" fill="none" stroke="#a8a8a8" stroke-width="5"/><path d="M30 2v12H18z" fill="#a8a8a8"/></svg>
        <svg viewBox="0 0 32 32"><path d="M10 17V3h14l6 6v8" fill="none" stroke="#bdbdbd" stroke-width="2.500"/><rect y="17" width="32" height="15" fill="url(#chk)"/><path d="M0 17v-5h6v5z" fill="url(#chk)"/></svg>
      </div>
    </section>
    <div class="handle"><i></i><i></i><i></i></div>
    <div class="rtabs two">
      <div class="ltab2"><svg class="t32" viewBox="0 0 32 32"><path d="M9 0h23l-5 8H4zM6 11h23l-5 8H1zM6 23h21l-4 8H1z" fill="#bdbdbd"/></svg><span>Layers</span></div>
      <div class="ltab2 on"><svg class="t32" viewBox="0 0 32 32"><rect x="1" y="1" width="30" height="30" fill="none" stroke="#bdbdbd" stroke-width="2"/><path d="M9 5v22M16 5v22M23 5v22" stroke="#8a8a8a" stroke-width="4"/></svg><span>Channels</span></div>
      <div class="ltab2"><svg class="t32" viewBox="0 0 32 32"><path d="M0 4h8l8 4 8-4h8v6l-8 1-8-2-8 2-8-1z" fill="#bdbdbd"/><path d="M5 27q11-26 22 0" fill="none" stroke="#bdbdbd" stroke-width="3"/></svg><span>Paths</span></div>
      <button class="cfgbtn ml" aria-label="Configure"><svg class="cfgic"><use href="#cfg"/></svg></button>
    </div>
    <section class="rpanel2">
      <div class="clist">
        <div class="crow"><svg class="eyei"><use href="#eye"/></svg><svg class="cthumb" viewBox="0 0 68 44"><rect width="68" height="44" fill="#000"/><use href="#blob" x="2" y="0" width="68" height="44" fill="#fff"/></svg><span>Gray</span></div>
        <div class="crow"><svg class="eyei"><use href="#eye"/></svg><svg class="cthumb" viewBox="0 0 68 44"><rect width="68" height="44" fill="#000"/><use href="#blob" x="2" y="0" width="68" height="44" fill="#fff"/></svg><span>Alpha</span></div>
      </div>
      <div class="lock"><span>Lock:</span>
        <svg viewBox="0 0 32 32" class="l32"><path d="M31 0L13 22l-4-3zM8 21l5 4q-3 6-12 7 3-2 3-5t4-6z" fill="url(#chk)"/></svg>
        <svg viewBox="0 0 32 32" class="l32"><path d="M16 0l6 6h-4v8h8v-4l6 6-6 6v-4h-8v8h4l-6 6-6-6h4v-8H6v4l-6-6 6-6v4h8V6h-4z" fill="url(#chk)"/></svg>
      </div>
      <div class="cempty"></div>
      <div class="actions low">
        <svg><use href="#newdoc"/></svg>
        <svg viewBox="0 0 32 32"><path d="M3 26L16 11l13 15" fill="none" stroke="#a0a0a0" stroke-width="4"/></svg>
        <svg viewBox="0 0 32 32"><path d="M3 11l13 15 13-15" fill="none" stroke="#a0a0a0" stroke-width="4"/></svg>
        <svg viewBox="0 0 32 32"><rect x="1.500" y="5" width="19" height="14" fill="none" stroke="#bdbdbd" stroke-width="2.500" stroke-dasharray="3 2"/><path d="M24 14h6.500v14H10v-6" fill="none" stroke="#bdbdbd" stroke-width="2.500" stroke-dasharray="3 2"/></svg>
        <svg viewBox="0 0 32 32"><rect x="1" y="1" width="30" height="30" fill="#5d5d5d" stroke="#999" stroke-width="2" stroke-dasharray="2 2"/><circle cx="16" cy="16" r="9" fill="url(#chk)"/></svg>
        <svg><use href="#delx"/></svg>
      </div>
    </section>
  </aside>
</main>

<div class="dialog" role="dialog" aria-label="Scale Image">
  <div class="dtitle">
    <div class="dlights"><i class="r"></i><i class="y"></i><i class="g"></i></div>
    <span>Scale Image</span>
  </div>
  <div class="dhead">
    <svg class="dicon" viewBox="0 0 44 44"><path d="M0 0h3l6 6V0h3v12H0V9h6L0 3z" fill="#bdbdbd"/><rect x="12" y="12" width="32" height="32" fill="#b4b4b4"/><rect x="17" y="17" width="22" height="19" fill="#555"/><path d="M28 20v14M24 22l4 6 4-6M19 33h18" stroke="#2e2e2e" stroke-width="2" fill="none"/></svg>
    <div class="dhtext"><div class="dh1">Scale Image</div><div class="dh2">[Murine_TA_Muscle_0_125] (imported)-1</div></div>
    <svg class="dprev" viewBox="0 0 68 44"><rect width="68" height="44" fill="#000"/><rect x="2" y="2" width="64" height="40" fill="url(#chks)"/><use href="#blob" x="0" y="0" width="70" height="44" fill="#fff"/></svg>
  </div>
  <div class="dbody">
    <h4 class="dsec">Image Size</h4>
    <div class="dgroup">
      <div class="fields">
        <label>Width:</label>
        <div class="spin"><div class="val">1560<i class="caret"></i></div><div class="btns"><svg class="tri"><use href="#tup"/></svg><svg class="tri"><use href="#tdn"/></svg></div></div>
        <label>Height:</label>
        <div class="spin"><div class="val">987</div><div class="btns"><svg class="tri"><use href="#tup"/></svg><svg class="tri"><use href="#tdn"/></svg></div></div>
        <span></span><div class="pixels">1558 × 987 pixels</div>
      </div>
      <svg class="chainic"><use href="#chain"/></svg>
      <div class="combo dpx"><span>px</span><svg class="chv"><use href="#chev"/></svg></div>
    </div>
    <div class="dgroup res">
      <div class="fields">
        <label>X resolution:</label>
        <div class="spin"><div class="val">0.271</div><div class="btns"><svg class="tri"><use href="#tup"/></svg><svg class="tri"><use href="#tdn"/></svg></div></div>
        <label>Y resolution:</label>
        <div class="spin"><div class="val">0.271</div><div class="btns"><svg class="tri"><use href="#tup"/></svg><svg class="tri"><use href="#tdn"/></svg></div></div>
      </div>
      <svg class="chainic"><use href="#chain"/></svg>
      <div class="combo dunit"><span>pixels/in</span><svg class="chv"><use href="#chev"/></svg></div>
    </div>
    <h4 class="dsec q">Quality</h4>
    <div class="interp">
      <label>Interpolation:</label>
      <div class="combo dint"><span>Cubic</span><svg class="chv"><use href="#chev"/></svg></div>
    </div>
    <div class="dbtns">
      <button>Help</button><button>Reset</button><button>Cancel</button><button class="def">Scale</button>
    </div>
  </div>
</div>
</body>
</html>
```

FILE: styles.css
```css
* { box-sizing: border-box; }
html, body { margin: 0; padding: 0; }
body {
  width: 2872px; height: 1690px; overflow: hidden; position: relative;
  background: #444; color: #d2d2d2;
  font: 21px/1.2 "Liberation Sans", "DejaVu Sans", sans-serif;
  display: flex; flex-direction: column;
}
.sprite { position: absolute; width: 0; height: 0; }
button { font: inherit; color: inherit; padding: 0; border: 0; background: none; }
h3, h4, p { margin: 0; }

/* mac menu bar */
.menubar {
  height: 39px; flex: none; display: flex; align-items: flex-start; position: relative;
  background: linear-gradient(90deg, #f8dcd9 0%, #fbe3df 72%, #dfe0ec 100%);
  border-bottom: 2px solid; border-image: linear-gradient(90deg, #7f4f4f, #7a4f52 70%, #3c4160) 1;
  color: #3b2a2a; font: 29.200px/30px "Liberation Sans", sans-serif;
}
.apple { width: 26px; height: 28px; margin-left: 34px; fill: #3b2a2a; flex: none; }
.menus { display: flex; gap: 36px; margin-left: 41px; white-space: nowrap; }
.appname { font-weight: 700; font-size: 28px; letter-spacing: 1.500px; margin-right: 2px; }
.status { margin-left: auto; display: flex; align-items: center; height: 30px; padding-right: 46px; font-size: 28px; }
.mi { flex: none; height: 30px; width: 44px; }
.mi.xo { height: 36px; margin-top: -2px; }
.mi.cc { width: 38px; height: 36px; margin-left: 22px; }
.mi.wifi { width: 42px; margin-left: 20px; }
.mi.air { width: 36px; margin-left: 24px; }
.pct { margin-left: 26px; font-size: 27px; }
.mi.batt { width: 46px; margin-left: 10px; }
.clock { margin-left: 34px; font-size: 28px; }
.mi.search { width: 30px; margin-left: 47px; }
.mi.siri { width: 34px; margin-left: 34px; height: 32px; }
.mi.list { width: 36px; margin-left: 22px; height: 26px; }

/* window title */
.wintitle {
  height: 43px; flex: none; background: #f6f6f6; border-bottom: 2px solid #d8d8d8;
  display: flex; align-items: center; position: relative; border-radius: 8px 8px 0 0;
}
.lights { display: flex; gap: 16px; margin-left: 8px; flex: none; }
.lights i { width: 24px; height: 24px; border-radius: 50%; background: #e2e2e2; border: 1px solid #d2d2d2; }
.wtext { position: absolute; left: 529px; top: 6px; color: #b4b4b4; font-size: 27.200px; white-space: nowrap; }

.app { flex: 1; display: flex; min-height: 0; }

/* left dock */
.ldock { width: 367px; flex: none; display: flex; flex-direction: column; overflow: hidden; }
.wilber { width: 367px; height: 53px; flex: none; display: block; margin-top: 2px; }
.tools {
  display: grid; grid-template-columns: repeat(5, 74px); grid-auto-rows: 64.200px;
  margin: 1px 0 0 -9px; flex: none;
}
.tool { display: flex; align-items: center; justify-content: center; }
.tool.active { background: #202020; border-radius: 9px; border: 1px solid #1a1a1a; }
.ic { width: 48px; height: 48px; fill: #bcbcbc; overflow: visible; }
.ic .g { fill: #8a8a8a; }
.ic .gs { fill: none; stroke: #8a8a8a; stroke-width: 3; }
.ic .st { fill: none; stroke: #bcbcbc; stroke-width: 3; }
.ic .st2 { fill: none; stroke: #bcbcbc; stroke-width: 2.500; }
.ic .st4 { fill: none; stroke: #bcbcbc; stroke-width: 4; }
.ic .st5 { fill: none; stroke: #bcbcbc; stroke-width: 5; }
.ic .st6 { fill: none; stroke: #bcbcbc; stroke-width: 6.500; }
.ic .dots { fill: none; stroke: #bcbcbc; stroke-width: 3.500; stroke-dasharray: 3.500 3.500; }
.ic .dots.sm { stroke-width: 2; stroke-dasharray: 2 2; }
.ic .dark { fill: #444; }
.ic .halo { fill: #bcbcbc; stroke: #444; stroke-width: 2; }
.ic .big { font: 700 64px "Liberation Sans", sans-serif; text-anchor: middle; fill: #bcbcbc; }

.colors { height: 98px; flex: none; position: relative; }
.fg { position: absolute; left: 127px; top: 8px; width: 75px; height: 56px; background: #fff; border: 2px solid #444; outline: 2px solid #333; outline-offset: -2px; z-index: 1; box-shadow: 0 0 0 1px #555; }
.bg { position: absolute; left: 158px; top: 36px; width: 76px; height: 56px; background: #000; border: 2px solid #111; }
.swap { position: absolute; left: 210px; top: 8px; width: 24px; height: 24px; }
.defcol { position: absolute; left: 126px; top: 68px; width: 24px; height: 24px; }
.defcol i { position: absolute; left: 0; top: 0; width: 14px; height: 14px; background: #000; border: 2px solid #aaa; }
.defcol b { position: absolute; left: 10px; top: 10px; width: 14px; height: 14px; background: #fff; border: 2px solid #aaa; }

.ltabs { display: flex; align-items: flex-end; height: 46px; flex: none; gap: 2px; padding-top: 2px; position: relative; z-index: 1; }
.ltab { width: 40px; height: 42px; background: #333; display: flex; align-items: center; justify-content: center; flex: none; }
.ltab.on { background: #444; border: 2px solid #555; border-left: 0; border-bottom: 0; height: 46px; margin-bottom: -2px; width: 40px; }
.ltab:nth-child(2) { width: 42px; }
.ltab.last { width: 46px; }
.t34 { width: 34px; height: 34px; }
.t34b { width: 36px; height: 36px; border: 2px solid #000; }
.ml { margin-left: auto; margin-right: 10px; align-self: center; }
.cfgbtn { width: 20px; height: 20px; display: block; }
.cfgic { width: 20px; height: 20px; display: block; }

.opts { flex: 1; border-top: 2px solid #555; border-right: 2px solid #555; }
.optitle { font-size: 20.500px; font-weight: 700; line-height: 26px; height: 26px; margin-left: 0; color: #d8d8d8; }
.combo {
  display: flex; align-items: center; background: #2c2c2c; border: 2px solid #1b1b1b; border-radius: 8px;
  color: #d0d0d0; flex: none;
}
.chv { width: 24px; height: 16px; color: #d8d8d8; flex: none; }
.modeline { display: flex; gap: 11px; height: 51px; width: 361px; }
.mode { width: 260px; padding: 0 12px 0 12px; font-size: 20px; margin-left: -1px; }
.mode .mval { margin-left: auto; margin-right: 13px; }
.rst { width: 91px; padding: 0 12px 0 10px; justify-content: space-between; }
.rsti { width: 32px; height: 32px; }

.scale { display: flex; align-items: center; position: relative; border: 2px solid #7c7c7c; }
.sname { position: relative; }
.sval { margin-left: auto; position: relative; }
.sbtns { display: flex; flex-direction: column; justify-content: space-between; align-items: center; position: relative; }
.sb { width: 20px; height: 14px; color: #cfcfcf; display: block; }
.sb.dimc { color: #777; transform: scaleY(-1); }
.op { width: 362px; height: 48px; margin-top: 8px; background: linear-gradient(90deg, #5a5a5a 0 331px, #000 331px 333px, #3c3c3c 333px); padding-left: 0; }
.op .sval { margin-right: 4px; }
.op .sbtns { width: 28px; height: 40px; }
.grp { font-size: 21px; line-height: 28px; margin-top: 6px; color: #d0d0d0; white-space: nowrap; }
.radio { height: 40px; margin-left: 26px; padding-left: 36px; position: relative; color: #cfcfcf; line-height: 36px; font-size: 20.700px; }
.radio::before { content: ""; position: absolute; left: 0; top: 6px; width: 26px; height: 26px; border-radius: 50%; background: #141414; }
.radio.on::after { content: ""; position: absolute; left: 8px; top: 14px; width: 10px; height: 10px; border-radius: 50%; background: #fff; }
.radio.dim { color: #8d8d8d; }
.grp + .radio { margin-top: 2px; }
.patrow { display: flex; align-items: center; margin: -2px 0 0 64px; height: 72px; width: 298px; }
.patbtn { width: 72px; height: 72px; background: #333; border: 2px solid #222; border-radius: 8px; display: flex; align-items: center; justify-content: center; flex: none; }
.pat { width: 52px; height: 52px; border: 2px solid #000; }
.patname { flex: 1; margin-left: 4px; height: 36px; background: #3a3a3a; color: #4e4e4e; padding-left: 8px; line-height: 36px; }
.grp.area { margin-top: 8px; }

.ofoot { height: 61px; width: 361px; flex: none; background: #3d3d3d; display: flex; align-items: center; padding: 0 33px 3px 26px; justify-content: space-between; margin-top: auto; }
.f32 { width: 32px; height: 32px; }

.vsep { width: 7px; flex: none; position: relative; border-left: 1px solid #3a3a3a; border-right: 2px solid #5a5a5a; }

/* center */
.center { flex: 1; display: flex; flex-direction: column; min-width: 0; }
.itabs { height: 86px; flex: none; display: flex; align-items: flex-end; padding-left: 7px; }
.itab { width: 77px; height: 71px; background: #444; border: 1px solid #555; border-bottom: 0; display: flex; justify-content: center; }
.itab.off { width: 86px; height: 60px; background: #333; margin-left: 0; border: 0; }
.ithumb { width: 76px; height: 58px; margin-top: 2px; }
.hrow { height: 32px; flex: none; display: flex; }
.qmask { width: 34px; padding-left: 5px; flex: none; display: flex; align-items: center; }
.qm { width: 26px; height: 26px; }
.hruler {
  flex: none; width: 2012px; position: relative; border-bottom: 2px solid #ddd;
  background: linear-gradient(90deg, #ddd 2px, transparent 2px) 8px 100% / 20px 8px repeat-x;
}
.hl { position: absolute; top: 3px; font-size: 13px; line-height: 14px; color: #c8d2e2; padding-left: 5px; border-left: 2px solid #ddd; height: 27px; }
.zoomfit { margin-left: 6px; flex: none; padding-top: 4px; }
.vrow { flex: 1; display: flex; min-height: 0; }
.vruler {
  width: 34px; flex: none; position: relative; border-right: 2px solid #ddd;
  background: linear-gradient(#ddd 2px, transparent 2px) 21px 5px / 11px 20px repeat-y;
}
.vl {
  position: absolute; left: 8px; width: 26px; padding-left: 4px; font-size: 13px; line-height: 16px; color: #c8d2e2;
  word-break: break-all; border-top: 2px solid #ddd; margin-top: -1px; padding-right: 12px;
}
.canvas { flex: 1; position: relative; display: flex; align-items: center; justify-content: center; padding: 0 2px 0 0; overflow: hidden; }
.image { width: 1558px; height: 986px; overflow: visible; flex: none; margin-top: 1px; }
.rough { filter: url(#rough); }
.mf { fill: #fff; shape-rendering: crispEdges; }
.antw { fill: none; stroke: #fff; stroke-width: 2; }
.antb { fill: none; stroke: #000; stroke-width: 2; stroke-dasharray: 7 7; shape-rendering: crispEdges; }
.hole { fill: #8c8c8c; stroke: #000; stroke-width: 2; stroke-dasharray: 4 3; }
.fy { fill: none; stroke: #e6d81e; stroke-width: 2; }
.fk { fill: none; stroke: #000; stroke-width: 2; stroke-dasharray: 7 7; }
.vscroll { width: 36px; flex: none; padding: 5px 7px 2px 1px; }
.vthumb { height: 100%; background: #5c5c5c; border: 2px solid #222; border-radius: 2px; }
.hsrow { height: 31px; flex: none; display: flex; align-items: stretch; }
.corner { width: 25px; margin: 4px 0 3px 8px; border: 2px dashed #888; background: #5c5c5c; flex: none; }
.hscroll { width: 2010px; margin-left: 7px; background: #5c5c5c; border: 2px solid #222; flex: none; }
.nav { width: 32px; height: 32px; margin-left: 2px; flex: none; }
.statusbar { height: 60px; flex: none; display: flex; align-items: flex-start; padding: 5px 0 0 159px; font-size: 24.400px; }
.sunit { width: 81px; height: 48px; padding: 0 8px 0 12px; justify-content: space-between; border-radius: 6px; font-size: 24px; }
.szoom { width: 70px; height: 48px; margin-left: 3px; background: #2d2d2d; display: flex; align-items: center; justify-content: center; }
.szoom span { background: #1f1f1f; padding: 0 3px; font-size: 22px; line-height: 26px; }
.sarr { width: 31px; height: 48px; justify-content: center; border-radius: 6px; }
.sarr .chv { width: 20px; }
.sfile { margin-left: 4px; line-height: 44px; color: #d4d4d4; white-space: nowrap; }

/* right dock */
.rdock { width: 405px; flex: none; display: flex; flex-direction: column; overflow: hidden; }
.rtabs { display: flex; height: 49px; flex: none; align-items: flex-end; gap: 2px; padding-top: 3px; position: relative; z-index: 1; }
.rtab { width: 46px; height: 44px; background: #333; display: flex; align-items: center; justify-content: center; flex: none; }
.rtab.on { width: 51px; height: 48px; background: #444; border: 2px solid #555; border-bottom: 0; margin-bottom: -2px; }
.rt { width: 36px; height: 36px; display: block; }
.aa { width: 36px; height: 36px; background: #fff; border: 2px solid #000; color: #333; font-size: 22px; line-height: 30px; text-align: center; }
.rpanel { height: 652px; flex: none; border: 2px solid #555; border-right: 0; padding-top: 2px; display: flex; flex-direction: column; }
.filter, .basic { display: flex; align-items: center; background: #222; flex: none; justify-content: space-between; padding: 0 12px 0 4px; }
.chvb { width: 20px; height: 14px; color: #e0e0e0; }
.filter { height: 30px; margin: 3px 9px 0 3px; box-shadow: 0 0 0 3px #333; }
.filter span { color: #777; font-style: italic; font-size: 22px; padding-left: 4px; }
.bname { height: 29px; flex: none; font-style: italic; font-size: 21.200px; line-height: 31px; color: #c4c4c4; padding-left: 3px; background: #383838; white-space: nowrap; }
.brushes { height: 436px; flex: none; display: flex; margin-left: 5px; background: #383838; }
.bgrid { width: 340px; height: 436px; flex: none; display: block; }
.bstrip { width: 20px; background: #444; flex: none; }
.bscroll { width: 30px; background: #222; padding: 0 2px; margin-left: 2px; flex: none; }
.bthumb { height: 230px; background: #5a5a5a; border-radius: 4px; }
.basic { height: 28px; margin: 9px 9px 0 7px; color: #d6d6d6; }
.spc { height: 47px; margin: 6px 5px 0 3px; flex: none; background: #3a3a3a; padding: 0 2px; }
.spc .fill { position: absolute; left: 0; top: 0; bottom: 0; width: 13px; background: #5c5c5c; border-right: 2px solid #000; }
.spc .sname { margin-left: 2px; }
.spc .sval { margin-right: 8px; }
.spc .sbtns { width: 22px; height: 38px; background: #444; }
.spc .sb:first-child { transform: scaleY(-1); }
.actions { display: flex; justify-content: space-between; align-items: center; height: 52px; padding: 0 22px 0 18px; flex: none; margin-top: 3px; }
.actions svg { width: 32px; height: 32px; flex: none; }
.handle { height: 9px; flex: none; display: flex; gap: 4px; justify-content: center; align-items: center; padding-right: 20px; }
.handle i { width: 8px; height: 4px; background: #8a8a8a; }
.rtabs.two { height: 41px; padding: 0; gap: 0; }
.ltab2 { display: flex; align-items: center; gap: 5px; height: 36px; background: #333; padding: 0 4px 0 4px; color: #c6c6c6; flex: none; font-size: 21.300px; width: 110px; }
.ltab2.on { height: 41px; width: 138px; background: #3e3e3e; border: 2px solid #555; border-bottom: 0; }
.ltab2:nth-child(3) { width: 102px; }
.t32 { width: 32px; height: 32px; flex: none; }
.rpanel2 { flex: 1; border-top: 2px solid #555; padding: 5px 6px 0 5px; display: flex; flex-direction: column; min-height: 0; }
.clist { height: 113px; flex: none; background: #202020; padding-top: 7px; }
.crow { height: 43px; display: flex; align-items: center; margin-bottom: 13px; }
.eyei { width: 40px; height: 32px; margin-left: 14px; flex: none; }
.cthumb { width: 68px; height: 44px; margin-left: 15px; flex: none; }
.crow span { margin-left: 12px; color: #cfcfcf; font-size: 21.500px; }
.lock { height: 59px; flex: none; display: flex; align-items: center; color: #9a9a9a; font-size: 21.500px; }
.l32 { width: 32px; height: 32px; margin-left: 12px; }
.l32:last-child { margin-left: 21px; }
.cempty { flex: 1; background: #333; border-radius: 2px; min-height: 0; }
.actions.low { height: 61px; padding: 0 16px 2px 14px; margin: 0; }

/* dialog */
.dialog {
  position: absolute; left: 424px; top: 113px; width: 764px; height: 602px; background: #444;
  border-radius: 10px; box-shadow: 0 28px 70px rgba(0,0,0,.55), 0 0 2px rgba(0,0,0,.5);
  color: #d4d4d4; overflow: visible; font-size: 24.300px;
}
.dtitle {
  height: 44px; border-radius: 10px 10px 0 0; background: linear-gradient(#f0f0f0, #d6d6d6);
  border-bottom: 1px solid #b8b8b8; display: flex; align-items: center; justify-content: center; position: relative;
  color: #4a4a4a; font-size: 26px; padding-top: 2px;
}
.dlights { position: absolute; left: 16px; top: 10px; display: flex; gap: 16px; }
.dlights i { width: 24px; height: 24px; border-radius: 50%; }
.dlights .r { background: #fc5b57; }
.dlights .y { background: #fdbc2e; }
.dlights .g { background: #2ac73f; }
.dhead { height: 60px; display: flex; align-items: center; padding: 0 10px 0 8px; border-bottom: 2px solid #383838; border-top: 2px solid #383838; }
.dicon { width: 44px; height: 44px; flex: none; }
.dhtext { margin-left: 14px; flex: 1; }
.dh1 { font-weight: 700; font-size: 28.500px; line-height: 26px; color: #dcdcdc; }
.dh2 { font-size: 20.400px; line-height: 22px; color: #cfcfcf; }
.dprev { width: 68px; height: 44px; flex: none; }
.dbody { padding: 21px 24px 0; }
.dsec { font-size: 24px; line-height: 28px; font-weight: 700; color: #d8d8d8; }
.dgroup { display: flex; align-items: flex-start; padding-left: 24px; margin-top: 3px; }
.dgroup.res { margin-top: 10px; }
.fields { display: grid; grid-template-columns: 150px 160px; row-gap: 7px; align-items: center; flex: none; }
.fields label { line-height: 30px; margin-top: -1px; }
.spin { display: flex; height: 39px; background: #333; padding: 4px 0 4px 4px; }
.val { width: 124px; background: #202020; padding-left: 5px; line-height: 30px; color: #dedede; }
.caret { display: inline-block; width: 2px; height: 26px; background: #eee; vertical-align: -5px; }
.btns { width: 32px; margin: -4px 0; background: #222; border: 2px solid #1a1a1a; display: flex; flex-direction: column; align-items: center; justify-content: space-around; }
.tri { width: 16px; height: 11px; color: #bdbdbd; display: block; }
.pixels { font-size: 21.500px; line-height: 24px; white-space: nowrap; margin-top: -3px; }
.chainic { width: 30px; height: 78px; margin: 6px 22px 0 12px; flex: none; }
.dpx { width: 97px; height: 52px; margin-top: 40px; padding: 0 10px 0 13px; justify-content: space-between; }
.dunit { width: 167px; height: 52px; margin-top: 40px; padding: 0 13px 0 13px; justify-content: space-between; }
.dsec.q { margin-top: 22px; }
.interp { display: flex; align-items: center; padding-left: 25px; margin-top: 1px; }
.interp label { width: 153px; flex: none; }
.dint { width: 538px; height: 52px; padding: 0 12px 0 20px; justify-content: space-between; font-size: 25.400px; }
.dbtns { display: flex; gap: 12px; margin-top: 47px; align-items: center; }
.dbtns button { width: 170px; height: 54px; background: #2c2c2c; border: 2px solid #1b1b1b; border-radius: 8px; color: #cfcfcf; font-size: 24px; }
.dbtns .def { width: 166px; height: 50px; margin-left: 2px; }
```
